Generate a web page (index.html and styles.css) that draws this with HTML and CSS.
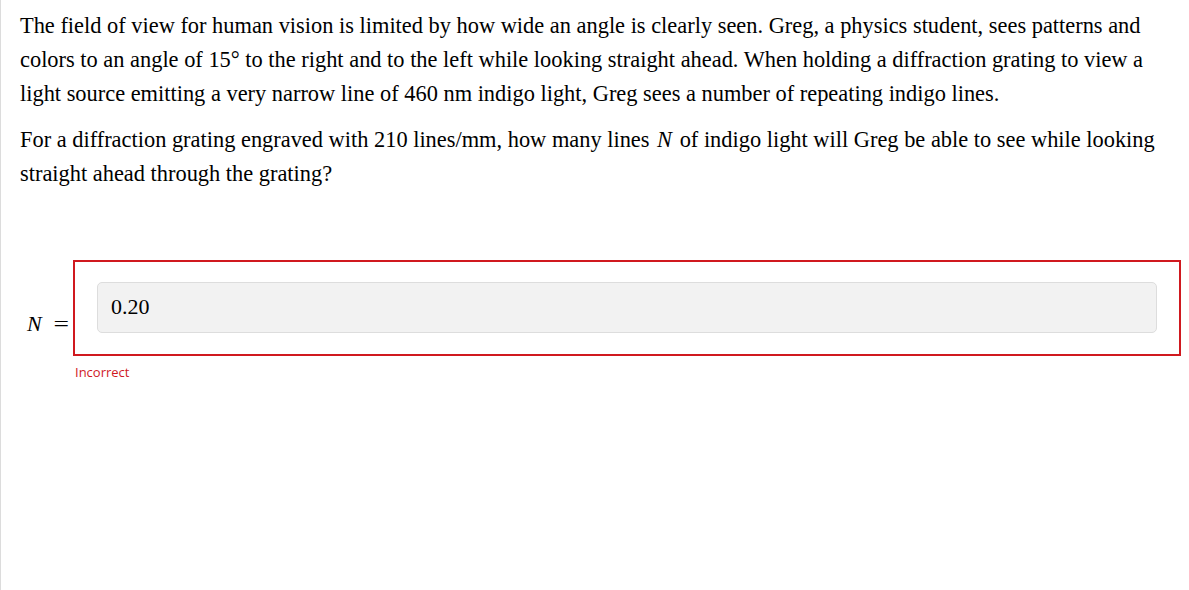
FILE: index.html
```html
<!DOCTYPE html>
<html>
<head>
<meta charset="utf-8">
<link rel="stylesheet" href="styles.css">
</head>
<body>
<div class="page">
  <div class="question">
    <p>The field of view for human vision is limited by how wide an angle is clearly seen. Greg, a physics student, sees patterns and colors to an angle of 15&deg; to the right and to the left while looking straight ahead. When holding a diffraction grating to view a light source emitting a very narrow line of 460&nbsp;nm indigo light, Greg sees a number of repeating indigo lines.</p>
    <p>For a diffraction grating engraved with 210&nbsp;lines/mm, how many lines <i class="var">N</i> of indigo light will Greg be able to see while looking straight ahead through the grating?</p>
  </div>
  <div class="answer-row">
    <div class="label"><i>N</i><span class="eq">=</span></div>
    <div class="answer-col">
      <div class="answer-box">
        <div class="input">0.20</div>
      </div>
      <div class="feedback">Incorrect</div>
    </div>
  </div>
</div>
</body>
</html>
```

FILE: styles.css
```css
html, body {
  margin: 0;
  padding: 0;
  background: #fff;
}
.page {
  border-left: 1px solid #dcdcdc;
  min-height: 590px;
  box-sizing: border-box;
  padding: 9px 0 0 19px;
  font-family: "Liberation Serif", "Times New Roman", serif;
  font-size: 22.4px;
  color: #000;
}
.question p {
  margin: 0 0 12px 0;
  line-height: 34px;
  width: 1152px;
}
.var {
  padding: 0 2px;
}
.answer-row {
  display: flex;
  align-items: flex-start;
  margin-top: 69px;
}
.label {
  width: 53px;
  box-sizing: border-box;
  padding-left: 7px;
  padding-top: 51px;
  font-size: 22px;
  white-space: nowrap;
}
.label .eq {
  display: inline-block;
  margin-left: 13px;
  transform: scaleX(1.25);
}
.answer-col {
  display: flex;
  flex-direction: column;
}
.answer-box {
  width: 1108px;
  box-sizing: border-box;
  border: 2px solid #d0191f;
  padding: 20px 22px 21px 22px;
}
.input {
  height: 51px;
  box-sizing: border-box;
  background: #f2f2f2;
  border: 1px solid #dddddd;
  border-radius: 5px;
  padding: 12px 13px;
  font-size: 22px;
  line-height: 24px;
  color: #000;
}
.feedback {
  font-family: "Open Sans", "Noto Sans", sans-serif;
  font-size: 13px;
  color: #d0191f;
  margin-top: 7px;
  margin-left: 2px;
}
```
